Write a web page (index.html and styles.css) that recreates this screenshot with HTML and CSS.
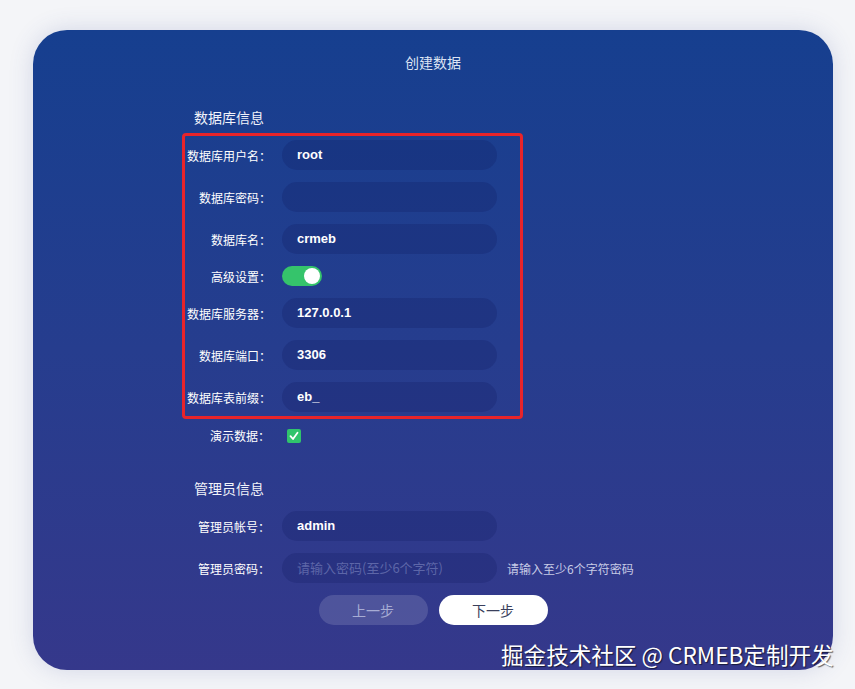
FILE: index.html
```html
<!DOCTYPE html>
<html lang="zh-CN">

<head>
    <meta charset="UTF-8">
    <title>创建数据</title>
    <link rel="stylesheet" href="styles.css">
</head>

<body>
    <div class="card">
        <h1 class="card-title">创建数据</h1>

        <div class="form">
            <h2 class="section-title">数据库信息</h2>

            <!-- highlighted block -->
            <div class="highlight">
                <div class="row">
                    <label>数据库用户名：</label>
                    <div class="field">root</div>
                </div>
                <div class="row">
                    <label>数据库密码：</label>
                    <div class="field"></div>
                </div>
                <div class="row">
                    <label>数据库名：</label>
                    <div class="field">crmeb</div>
                </div>
                <div class="row row-small">
                    <label>高级设置：</label>
                    <div><span class="switch"><span class="knob"></span></span></div>
                </div>
                <div class="row">
                    <label>数据库服务器：</label>
                    <div class="field">127.0.0.1</div>
                </div>
                <div class="row">
                    <label>数据库端口：</label>
                    <div class="field">3306</div>
                </div>
                <div class="row">
                    <label>数据库表前缀：</label>
                    <div class="field">eb_</div>
                </div>
            </div>

            <div class="row row-check">
                <label>演示数据：</label>
                <div>
                    <span class="checkbox">
                        <svg width="14" height="14" viewBox="0 0 14 14">
                            <path d="M3.5 7.2 L6 10 L10.5 3.8" fill="none" stroke="#fff" stroke-width="1.8" stroke-linecap="round" stroke-linejoin="round" />
                        </svg>
                    </span>
                </div>
            </div>

            <h2 class="section-title section-admin">管理员信息</h2>

            <div class="row">
                <label>管理员帐号：</label>
                <div class="field">admin</div>
            </div>
            <div class="row">
                <label>管理员密码：</label>
                <div class="field placeholder">请输入密码(至少6个字符)</div>
                <span class="hint">请输入至少6个字符密码</span>
            </div>
        </div>

        <div class="actions">
            <button class="btn btn-prev" type="button">上一步</button>
            <button class="btn btn-next" type="button">下一步</button>
        </div>
    </div>

    <div class="watermark">掘金技术社区 @ CRMEB定制开发</div>
</body>

</html>
```

FILE: styles.css
```css
body {
    margin: 0;
    padding: 30px 0 0 33px;
    min-height: 100vh;
    box-sizing: border-box;
    background-color: #f4f5f8;
    font-family: "Noto Sans CJK SC", "Liberation Sans", sans-serif;
    color: #fff;
}

/* Main card */
.card {
    width: 800px;
    height: 640px;
    box-sizing: border-box;
    padding-top: 22px;
    border-radius: 34px;
    background: linear-gradient(180deg, #163f8f 0%, #263d8e 50%, #35388b 100%);
    box-shadow: 0 0 24px rgba(60, 80, 150, 0.18);
}

.card-title {
    margin: 0;
    font-size: 14px;
    font-weight: normal;
    line-height: 20px;
    text-align: center;
    color: #dde4f3;
}

.form {
    margin: 35px 0 0 149px;
}

.section-title {
    margin: 0 0 6px 12px;
    font-size: 14px;
    font-weight: normal;
    line-height: 20px;
    color: #f1f3fa;
}

.section-admin {
    margin-top: 35px;
    margin-bottom: 13px;
}

/* Form rows */
.row {
    display: grid;
    grid-template-columns: 88px 215px auto;
    column-gap: 12px;
    align-items: center;
    height: 30px;
    margin-bottom: 12px;
}

.row label {
    font-size: 12px;
    text-align: right;
    color: #fff;
    white-space: nowrap;
}

.row-small {
    height: 20px;
}

.row-check {
    height: 16px;
    margin-top: 8px;
    margin-bottom: 0;
}

.field {
    height: 30px;
    line-height: 30px;
    padding-left: 15px;
    border-radius: 15px;
    background-color: rgba(12, 22, 90, 0.22);
    font-family: "Liberation Sans", sans-serif;
    font-size: 13px;
    font-weight: bold;
    color: #fff;
}

.field.placeholder {
    font-family: "Noto Sans CJK SC", sans-serif;
    font-weight: normal;
    color: #5d66a8;
}

.hint {
    font-size: 12px;
    color: #c7cbe6;
    margin-left: -2px;
}

/* Red highlight around database rows */
.highlight {
    width: 341px;
    box-sizing: border-box;
    border: 3px solid #e8242a;
    border-radius: 4px;
    padding: 4px 0 4px 0;
}

.highlight .row {
    grid-template-columns: 86px 215px;
    column-gap: 11px;
}

.highlight .row:last-child {
    margin-bottom: 0;
}

/* Toggle switch */
.switch {
    display: block;
    position: relative;
    width: 40px;
    height: 20px;
    border-radius: 10px;
    background-color: #35c46b;
}

.knob {
    position: absolute;
    top: 2px;
    right: 2px;
    width: 16px;
    height: 16px;
    border-radius: 50%;
    background-color: #fff;
}

.checkbox {
    display: block;
    width: 14px;
    height: 14px;
    margin-left: 5px;
    border-radius: 2px;
    background-color: #30c46c;
}

.checkbox svg {
    display: block;
}

/* Step buttons */
.actions {
    display: flex;
    justify-content: center;
    gap: 11px;
    margin-top: 5px;
}

.btn {
    width: 109px;
    height: 30px;
    border: none;
    border-radius: 15px;
    font-family: "Noto Sans CJK SC", sans-serif;
    font-size: 14px;
    cursor: pointer;
}

.btn-prev {
    background-color: rgba(255, 255, 255, 0.14);
    color: #a7acd4;
}

.btn-next {
    background-color: #fff;
    color: #3a3f5c;
}

/* Watermark overlay */
.watermark {
    position: absolute;
    left: 501px;
    top: 639px;
    font-size: 22.6px;
    line-height: 32px;
    color: #fff;
    white-space: nowrap;
    text-shadow: 1px 1px 1px rgba(0, 0, 0, 0.6);
}
```
